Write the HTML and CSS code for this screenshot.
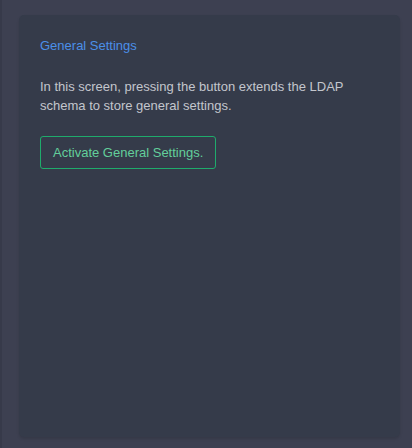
FILE: index.html
```html
<!DOCTYPE html>
<html lang="en">
<head>
  <meta charset="UTF-8">
  <meta name="viewport" content="width=device-width, initial-scale=1.0">
  <title>General Settings</title>
  <link rel="stylesheet" href="styles.css">
</head>
<body>
  <div class="page">
    <div class="card">
      <h2 class="card-title">General Settings</h2>
      <p class="card-text">In this screen, pressing the button extends the LDAP schema to store general settings.</p>
      <button class="activate-button">Activate General Settings.</button>
    </div>
  </div>
</body>
</html>
```

FILE: styles.css
```css
html, body {
  height: 100%;
}

body {
  font-family: "Liberation Sans", Arial, sans-serif;
  background-color: #3d4051;
  margin: 0;
  overflow: hidden;
}

.page {
  padding: 15px 12px 11px 17px;
  border-left: 2px solid #373a4a;
}

.card {
  height: 422px;
  box-sizing: border-box;
  display: flex;
  flex-direction: column;
  align-items: flex-start;
  background: #353b4a;
  border-radius: 5px;
  box-shadow: 0 2px 3px rgba(0, 0, 0, 0.12);
  padding: 23px 21px;
}

.card-title {
  margin: 0;
  font-size: 13px;
  font-weight: normal;
  color: #4b8fe8;
  line-height: 16px;
}

.card-text {
  margin: 23px 0 0;
  font-size: 13px;
  line-height: 19px;
  color: #c3c6cd;
}

.activate-button {
  margin-top: 21px;
  padding: 8px 12px;
  font-family: inherit;
  font-size: 13px;
  line-height: 15px;
  color: #63cf9b;
  background: transparent;
  border: 1px solid #1fab6c;
  border-radius: 3px;
  cursor: pointer;
}

.activate-button:hover {
  background-color: rgba(31, 171, 108, 0.1);
}
```
